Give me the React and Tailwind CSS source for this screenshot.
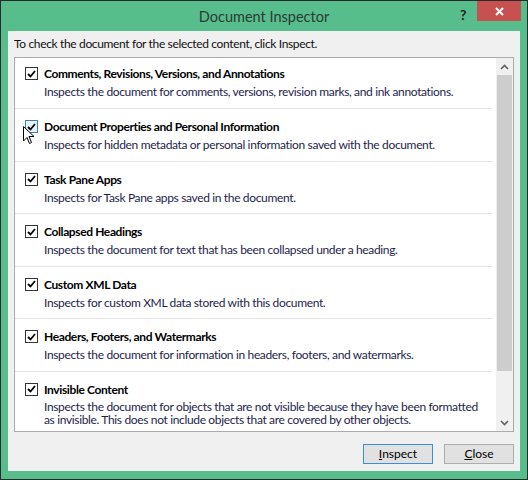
import React from "react";

const items = [
  ["Comments, Revisions, Versions, and Annotations", "Inspects the document for comments, versions, revision marks, and ink annotations."],
  ["Document Properties and Personal Information", "Inspects for hidden metadata or personal information saved with the document."],
  ["Task Pane Apps", "Inspects for Task Pane apps saved in the document."],
  ["Collapsed Headings", "Inspects the document for text that has been collapsed under a heading."],
  ["Custom XML Data", "Inspects for custom XML data stored with this document."],
  ["Headers, Footers, and Watermarks", "Inspects the document for information in headers, footers, and watermarks."],
];

function Check({ hover }) {
  return (
    <div className={`w-[13px] h-[13px] border flex items-center justify-center shrink-0 ${hover ? "border-[#3c7fb1] bg-[#e5f1fb]" : "border-[#333] bg-white"}`}>
      <svg width="9" height="8" viewBox="0 0 9 8">
        <path d="M1 4 L3.5 6.5 L8 1" fill="none" stroke="#000" strokeWidth="1.8" />
      </svg>
    </div>
  );
}

function Row({ title, desc, hover, first }) {
  return (
    <div className={`relative shrink-0 flex gap-[6px] pl-[10px] ${first ? "h-[50px] pt-[8px]" : "h-[52.6px] pt-[10px] border-t border-[#e3e3e3]"}`}>
      <div className="pt-[1px]"><Check hover={hover} /></div>
      <div className="flex flex-col">
        <div className="text-[12px] leading-[15px] font-bold text-black tracking-[-0.38px]">{title}</div>
        <div className="text-[12px] leading-[15px] mt-[3px] text-[#1e1e4c] tracking-[-0.35px]">{desc}</div>
      </div>
    </div>
  );
}

export default function App() {
  return (
    <div className="w-[528px] h-[480px] bg-[#2a2a2a] p-[1px]" style={{ fontFamily: 'Lato, "Noto Sans", sans-serif' }}>
      <div className="w-full h-full bg-[#58bd8c] flex flex-col">
        <div className="h-[30px] relative flex items-center justify-center">
          <div className="text-[14.5px] text-[#2b3b33] mt-[1px]">Document Inspector</div>
          <div className="absolute left-[459px] top-[3px] text-[14px] font-bold text-[#222]">?</div>
          <div className="absolute left-[476px] top-0 w-[44px] h-[20px] bg-[#c75050] flex items-center justify-center">
            <svg width="9" height="9" viewBox="0 0 9 9">
              <path d="M1 1 L8 8 M8 1 L1 8" stroke="#fff" strokeWidth="2" />
            </svg>
          </div>
        </div>
        <div className="flex-1 mx-[7px] mb-[8px] bg-[#f0f0f0] flex flex-col px-[6px]">
          <div className="h-[26px] pt-[5px] text-[12px] leading-[15px] text-[#111] tracking-[-0.35px]">To check the document for the selected content, click Inspect.</div>
          <div className="h-[375px] border border-[#acacac] bg-white flex">
            <div className="flex-1 flex flex-col overflow-hidden pr-[4px]">
              {items.map((it, i) => (
                <Row key={i} title={it[0]} desc={it[1]} first={i === 0} hover={i === 1} />
              ))}
              <div className="shrink-0 flex gap-[6px] pl-[10px] pt-[10px] border-t border-[#e3e3e3]">
                <div className="pt-[1px]"><Check /></div>
                <div className="flex flex-col pr-[8px]">
                  <div className="text-[12px] leading-[15px] font-bold text-black tracking-[-0.38px]">Invisible Content</div>
                  <div className="text-[12px] leading-[13px] mt-[3px] text-[#1e1e4c] tracking-[-0.35px]">
                    Inspects the document for objects that are not visible because they have been formatted as invisible. This does not include objects that are covered by other objects.
                  </div>
                </div>
              </div>
            </div>
            <div className="w-[17px] bg-[#f0f0f0] flex flex-col items-center">
              <div className="h-[17px] flex items-center justify-center">
                <svg width="9" height="6" viewBox="0 0 9 6"><path d="M1 5 L4.5 1.5 L8 5" fill="none" stroke="#606060" strokeWidth="1.6" /></svg>
              </div>
              <div className="w-[15px] h-[296px] bg-[#cdcdcd]" />
              <div className="flex-1" />
              <div className="h-[17px] flex items-center justify-center">
                <svg width="9" height="6" viewBox="0 0 9 6"><path d="M1 1 L4.5 4.5 L8 1" fill="none" stroke="#606060" strokeWidth="1.6" /></svg>
              </div>
            </div>
          </div>
          <div className="flex justify-end gap-[11px] mt-[12px]">
            <button className="w-[70px] h-[20px] border border-[#3c8fd6] bg-[#e1e1e1] text-[12px] text-black leading-none"><span className="underline">I</span>nspect</button>
            <button className="w-[70px] h-[20px] border border-[#adadad] bg-[#e1e1e1] text-[12px] text-black leading-none"><span className="underline">C</span>lose</button>
          </div>
        </div>
      </div>
      <svg className="absolute left-[23px] top-[126px]" width="12" height="19" viewBox="0 0 12 19">
        <path d="M0.5 0.5 L0.5 15 L4 11.5 L6.5 17.5 L8.5 16.5 L6 10.5 L11 10.5 Z" fill="#fff" stroke="#000" strokeWidth="1" />
      </svg>
    </div>
  );
}
